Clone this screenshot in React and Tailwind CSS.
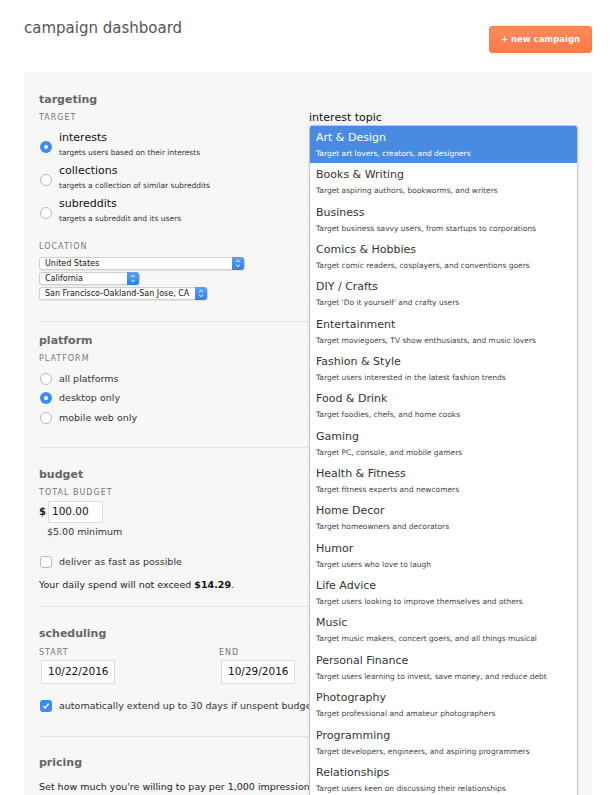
import React from "react";

const topics = [
  ["Art & Design", "Target art lovers, creators, and designers"],
  ["Books & Writing", "Target aspiring authors, bookworms, and writers"],
  ["Business", "Target business savvy users, from startups to corporations"],
  ["Comics & Hobbies", "Target comic readers, cosplayers, and conventions goers"],
  ["DIY / Crafts", "Target 'Do it yourself' and crafty users"],
  ["Entertainment", "Target moviegoers, TV show enthusiasts, and music lovers"],
  ["Fashion & Style", "Target users interested in the latest fashion trends"],
  ["Food & Drink", "Target foodies, chefs, and home cooks"],
  ["Gaming", "Target PC, console, and mobile gamers"],
  ["Health & Fitness", "Target fitness experts and newcomers"],
  ["Home Decor", "Target homeowners and decorators"],
  ["Humor", "Target users who love to laugh"],
  ["Life Advice", "Target users looking to improve themselves and others"],
  ["Music", "Target music makers, concert goers, and all things musical"],
  ["Personal Finance", "Target users learning to invest, save money, and reduce debt"],
  ["Photography", "Target professional and amateur photographers"],
  ["Programming", "Target developers, engineers, and aspiring programmers"],
  ["Relationships", "Target users keen on discussing their relationships"],
];

const Radio = ({ checked }) =>
  checked ? (
    <span className="flex h-[12px] w-[12px] shrink-0 items-center justify-center rounded-full bg-[#3a8df5]">
      <span className="h-[4px] w-[4px] rounded-full bg-white" />
    </span>
  ) : (
    <span className="block h-[12px] w-[12px] shrink-0 rounded-full border border-[#b9b9b9] bg-white" />
  );

const Checkbox = ({ checked }) =>
  checked ? (
    <span className="flex h-[12px] w-[12px] shrink-0 items-center justify-center rounded-[3px] bg-[#3a8df5]">
      <svg width="8" height="8" viewBox="0 0 8 8">
        <path d="M1.3 4.2 L3.1 6 L6.7 1.8" fill="none" stroke="white" strokeWidth="1.4" />
      </svg>
    </span>
  ) : (
    <span className="block h-[12px] w-[12px] shrink-0 rounded-[3px] border border-[#b9b9b9] bg-white" />
  );

const Select = ({ label, width }) => (
  <div
    className="mt-[2px] flex h-[13px] items-center justify-between rounded-[3px] border border-[#cfcfcf] bg-white pl-[5px] shadow-[0_1px_1px_rgba(0,0,0,0.08)]"
    style={{ width }}
  >
    <span className="text-[8px] leading-[11px] text-[#111]">{label}</span>
    <span className="flex h-[13px] w-[12px] items-center justify-center rounded-r-[3px] bg-gradient-to-b from-[#5aa2f7] to-[#2c7ff0]">
      <svg width="6" height="9" viewBox="0 0 6 9">
        <path d="M1 3.2 L3 1.3 L5 3.2 M1 5.8 L3 7.7 L5 5.8" fill="none" stroke="white" strokeWidth="1" />
      </svg>
    </span>
  </div>
);

const Heading = ({ children, className }) => (
  <div className={`text-[11px] font-bold leading-[14px] text-[#666] ${className}`}>{children}</div>
);

const Label = ({ children, className }) => (
  <div className={`text-[8px] uppercase leading-[10px] tracking-[1px] text-[#777] ${className}`}>
    {children}
  </div>
);

const Divider = ({ className }) => <div className={`h-px bg-[#e4e4e4] ${className}`} />;

export default function App() {
  return (
    <div className="min-h-screen bg-white font-['DejaVu_Sans',sans-serif] text-[#333]">
      {/* Header */}
      <div className="flex items-start justify-between px-[24px] pt-[19px]">
        <h1 className="text-[15px] leading-[18px] text-[#555]">campaign dashboard</h1>
        <button className="mt-[7px] h-[27px] w-[103px] rounded-[3px] border border-[#f67c4c] bg-gradient-to-b from-[#ff8c5e] to-[#ff7748] text-[8.5px] font-bold text-white">
          + new campaign
        </button>
      </div>

      {/* Panel */}
      <div className="relative mx-[24px] mt-[19px] bg-[#f7f7f7] px-[15px] pb-[40px] pt-[21px]">
        {/* targeting */}
        <Heading>targeting</Heading>
        <Label className="mt-[6px]">Target</Label>
        <div className="mt-[8px] flex flex-col gap-[6px]">
          {[
            ["interests", "targets users based on their interests", true],
            ["collections", "targets a collection of similar subreddits", false],
            ["subreddits", "targets a subreddit and its users", false],
          ].map(([t, d, c]) => (
            <div key={t} className="flex gap-[7px]">
              <div className="pl-px pt-[10px]">
                <Radio checked={c} />
              </div>
              <div>
                <div className="text-[11px] leading-[14px] text-[#111]">{t}</div>
                <div className="mt-[3px] text-[7.5px] leading-[10px] text-[#333]">{d}</div>
              </div>
            </div>
          ))}
        </div>
        <Label className="mt-[18px]">Location</Label>
        <div className="mt-[3px] flex flex-col">
          <Select label="United States" width={206} />
          <Select label="California" width={101} />
          <Select label="San Francisco-Oakland-San Jose, CA" width={169} />
        </div>
        <Divider className="mt-[21px]" />

        {/* platform */}
        <Heading className="mt-[12px]">platform</Heading>
        <Label className="mt-[6px]">Platform</Label>
        <div className="mt-[8px] flex flex-col gap-[5.3px]">
          {[
            ["all platforms", false],
            ["desktop only", true],
            ["mobile web only", false],
          ].map(([t, c]) => (
            <div key={t} className="flex items-center gap-[7px] pl-px">
              <Radio checked={c} />
              <span className="text-[9.5px] leading-[14px] text-[#333]">{t}</span>
            </div>
          ))}
        </div>
        <Divider className="mt-[22px]" />

        {/* budget */}
        <Heading className="mt-[20px]">budget</Heading>
        <Label className="mt-[6px]">Total Budget</Label>
        <div className="mt-[3px] flex items-center gap-[2px]">
          <span className="text-[10px] font-bold text-[#222]">$</span>
          <div className="flex h-[22px] w-[55px] items-center border border-[#dcdcdc] bg-white pl-[3px] text-[10.5px] text-[#111]">
            100.00
          </div>
        </div>
        <div className="mt-[3px] pl-[8px] text-[9.5px] leading-[12px] text-[#333]">$5.00 minimum</div>
        <div className="mt-[17px] flex items-center gap-[7px] pl-px">
          <Checkbox />
          <span className="text-[9.5px] leading-[14px] text-[#333]">deliver as fast as possible</span>
        </div>
        <div className="mt-[9px] text-[9.5px] leading-[14px] text-[#222]">
          Your daily spend will not exceed <b className="text-[#111]">$14.29</b>.
        </div>
        <Divider className="mt-[14px]" />

        {/* scheduling */}
        <Heading className="mt-[20px]">scheduling</Heading>
        <div className="mt-[7px] flex">
          {[
            ["Start", "10/22/2016"],
            ["End", "10/29/2016"],
          ].map(([l, v]) => (
            <div key={l} className="w-[180px]">
              <Label>{l}</Label>
              <div className="ml-[2px] mt-[2px] flex h-[24px] w-[74px] items-center border border-[#dcdcdc] bg-white pl-[6px] text-[10.5px] text-[#111]">
                {v}
              </div>
            </div>
          ))}
        </div>
        <div className="mt-[15px] flex w-[270px] items-center gap-[7px] overflow-hidden whitespace-nowrap pl-px">
          <Checkbox checked />
          <span className="text-[9.5px] leading-[14px] text-[#333]">
            automatically extend up to 30 days if unspent budget remains
          </span>
        </div>
        <Divider className="mt-[23px]" />

        {/* pricing */}
        <Heading className="mt-[19px]">pricing</Heading>
        <div className="mt-[10px] w-[270px] overflow-hidden whitespace-nowrap text-[9.5px] leading-[14px] text-[#222]">
          Set how much you're willing to pay per 1,000 impressions
        </div>

        {/* open interest topic dropdown */}
        <div className="absolute left-[285px] top-[39px] w-[269px]">
          <div className="text-[11px] leading-[14px] text-[#111]">interest topic</div>
          <div className="overflow-hidden rounded-[3px] border border-[#c8c8c8] bg-white shadow-[0_1px_3px_rgba(0,0,0,0.12)]">
            {topics.map(([t, d], i) => (
              <div
                key={t}
                className={`h-[37.35px] px-[6px] pt-[5px] ${i === 0 ? "bg-[#4a8be2] text-white" : "text-[#333]"}`}
              >
                <div className="text-[11px] leading-[14px]">{t}</div>
                <div className={`mt-[4px] whitespace-nowrap text-[7.5px] leading-[10px] ${i === 0 ? "text-white" : "text-[#444]"}`}>
                  {d}
                </div>
              </div>
            ))}
          </div>
        </div>
      </div>
    </div>
  );
}
